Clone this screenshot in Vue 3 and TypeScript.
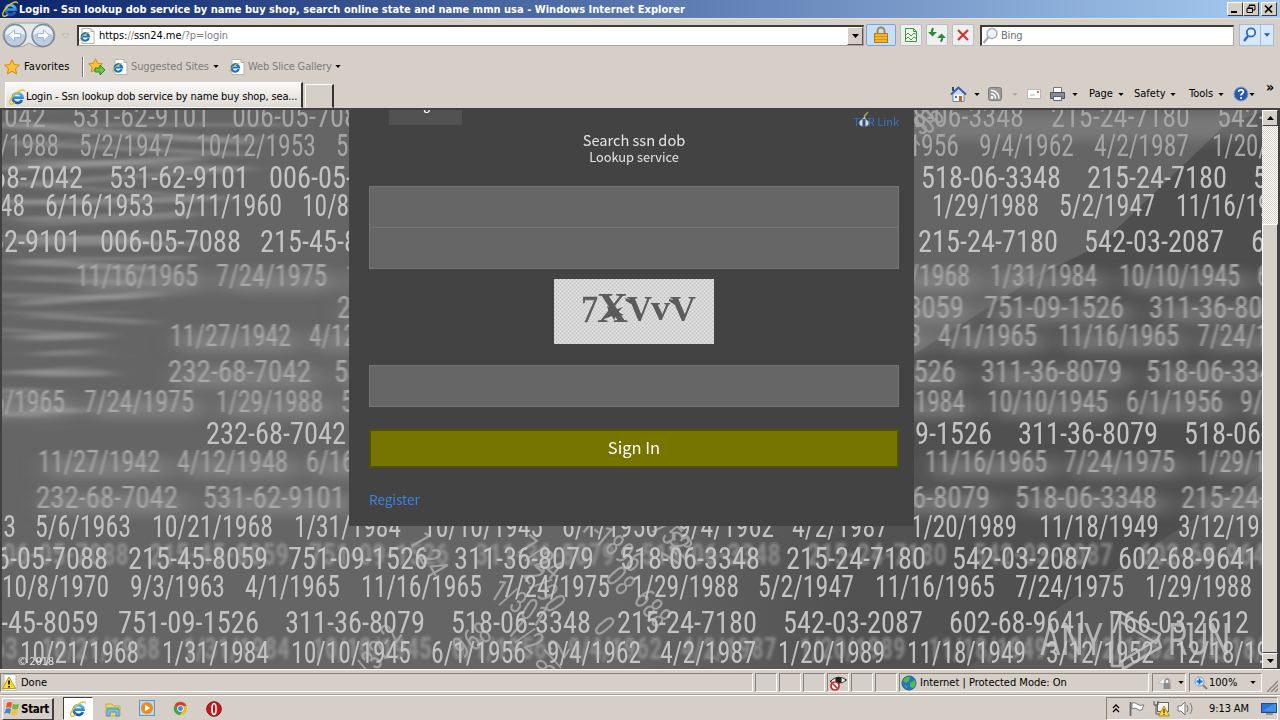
<script setup lang="ts">
type Item = [string, number, number]
interface Row { y: number; soft?: boolean; echo?: boolean; dim?: boolean; items: Item[] }

const rows: Row[] = [
  { y: 127, dim: true, items: [['232-68-7042', -94, 140], ['531-62-9101', 72, 138], ['006-05-7088', 232, 140], ['518-06-3348', 885, 139], ['215-24-7180', 1051, 139], ['542-03-2087', 1217, 139]] },
  { y: 156, dim: true, items: [['10/21/1988', -60, 119], ['5/2/1947', 79, 95], ['10/12/1953', 196, 120], ['5/11/1960', 336, 106], ['6/1/1956', 864, 95], ['9/4/1962', 979, 95], ['4/2/1987', 1094, 95], ['1/20/1989', 1212, 105]] },
  { y: 188, items: [['232-68-7042', -57, 140], ['531-62-9101', 109, 140], ['006-05-7088', 269, 140], ['518-06-3348', 921, 140], ['215-24-7180', 1087, 140], ['542-03-2087', 1253, 140]] },
  { y: 216, items: [['4/12/1948', -82, 107], ['6/16/1953', 45, 109], ['5/11/1960', 173, 109], ['10/8/1970', 302, 107], ['1/29/1988', 932, 107], ['5/2/1947', 1059, 96], ['11/16/1965', 1176, 120]] },
  { y: 252, items: [['531-62-9101', -59, 140], ['006-05-7088', 100, 141], ['215-45-8059', 260, 140], ['215-24-7180', 918, 140], ['542-03-2087', 1084, 140], ['602-68-9641', 1251, 139]] },
  { y: 286, soft: true, items: [['11/16/1965', 76, 122], ['7/24/1975', 216, 111], ['1/29/1988', 346, 107], ['10/21/1968', 849, 121], ['1/31/1984', 990, 107], ['10/10/1945', 1119, 121], ['6/1/1956', 1257, 97]] },
  { y: 318, soft: true, items: [['232-68-7042', 337, 142], ['215-45-8059', 822, 142], ['751-09-1526', 984, 140], ['311-36-8079', 1149, 142]] },
  { y: 346, soft: true, items: [['11/27/1942', 170, 121], ['4/12/1948', 309, 107], ['9/3/1963', 824, 97], ['4/1/1965', 938, 99], ['11/16/1965', 1058, 121], ['7/24/1975', 1197, 111]] },
  { y: 382, soft: true, items: [['232-68-7042', 168, 143], ['531-62-9101', 334, 142], ['751-09-1526', 814, 142], ['311-36-8079', 981, 141], ['518-06-3348', 1146, 142]] },
  { y: 412, soft: true, items: [['11/16/1965', -56, 121], ['7/24/1975', 84, 110], ['1/29/1988', 216, 107], ['5/2/1947', 341, 97], ['1/31/1984', 858, 107], ['10/10/1945', 987, 121], ['6/1/1956', 1126, 97], ['9/4/1962', 1240, 97]] },
  { y: 444, items: [['232-68-7042', 206, 140], ['751-09-1526', 852, 140], ['311-36-8079', 1018, 140], ['518-06-3348', 1184, 140]] },
  { y: 472, soft: true, items: [['11/27/1942', 38, 122], ['4/12/1948', 177, 111], ['6/16/1953', 306, 111], ['11/16/1965', 925, 122], ['7/24/1975', 1064, 111], ['1/29/1988', 1197, 107]] },
  { y: 508, soft: true, items: [['232-68-7042', 36, 142], ['531-62-9101', 203, 142], ['311-36-8079', 848, 142], ['518-06-3348', 1015, 142], ['215-24-7180', 1181, 142]] },
  { y: 537, items: [['9/3/1963', -80, 96], ['5/6/1963', 35, 96], ['10/21/1968', 152, 121], ['1/31/1984', 294, 107], ['10/10/1945', 423, 120], ['6/1/1956', 562, 96], ['9/4/1962', 678, 96], ['4/2/1987', 792, 96], ['1/20/1989', 911, 106], ['11/18/1949', 1039, 120], ['3/12/1952', 1178, 107]] },
  { y: 569, echo: true, items: [['006-05-7088', -32, 140], ['215-45-8059', 128, 140], ['751-09-1526', 288, 140], ['311-36-8079', 454, 140], ['518-06-3348', 620, 140], ['215-24-7180', 786, 140], ['542-03-2087', 952, 140], ['602-68-9641', 1118, 140]] },
  { y: 597, items: [['10/8/1970', 2, 107], ['9/3/1963', 130, 95], ['4/1/1965', 245, 95], ['11/16/1965', 361, 121], ['7/24/1975', 502, 108], ['1/29/1988', 632, 107], ['5/2/1947', 758, 96], ['11/16/1965', 875, 120], ['7/24/1975', 1015, 109], ['1/29/1988', 1145, 107]] },
  { y: 633, items: [['215-45-8059', -41, 140], ['751-09-1526', 118, 141], ['311-36-8079', 285, 140], ['518-06-3348', 451, 140], ['215-24-7180', 617, 140], ['542-03-2087', 783, 140], ['602-68-9641', 949, 139], ['766-03-2612', 1109, 140]] },
  { y: 663, echo: true, items: [['5/6/1963', -98, 95], ['10/21/1968', 20, 119], ['1/31/1984', 162, 107], ['10/10/1945', 291, 120], ['6/1/1956', 431, 95], ['9/4/1962', 547, 94], ['4/2/1987', 660, 96], ['1/20/1989', 778, 107], ['11/18/1949', 907, 119], ['3/12/1952', 1046, 108], ['12/18/1953', 1175, 119]] },
]
const softRows = rows.filter(r => r.soft)
const echoRows = rows.filter(r => r.echo)

const scattered = [
  { t: '1-24', x: 408, y: 540, r: 60 }, { t: '1/32-2', x: 364, y: 690, r: -55 },
  { t: '1/301', x: 488, y: 596, r: 32 }, { t: '7/24', x: 515, y: 550, r: 40 },
  { t: '1-1896', x: 578, y: 528, r: 40 }, { t: '2/90', x: 522, y: 575, r: 55 },
  { t: '08', x: 604, y: 578, r: 48 }, { t: '688', x: 632, y: 600, r: 50 },
  { t: '1/52', x: 644, y: 520, r: 48 }, { t: '1/2', x: 505, y: 632, r: 40 },
  { t: '968', x: 462, y: 660, r: -35 }, { t: '98/2', x: 545, y: 690, r: -58 },
  { t: '0', x: 592, y: 628, r: 50 }, { t: '1/3', x: 676, y: 570, r: -58 },
  { t: '1/30', x: 910, y: 156, r: -56 }, { t: '06', x: 928, y: 136, r: -45 },
]
const streaks = Array.from({ length: 46 }, (_, i) => ({
  x: (i * 37) % 60 - 20,
  y: 114 + i * 6.9 + ((i * 29) % 11) - 5,
  w: Math.max(50, 225 - i * 5 + ((i * 53) % 60)),
  h: 2 + (i * 17) % 5,
  a: ((i * 31) % 9) - 4,
  o: 0.08 + ((i * 7) % 5) * 0.06,
}))
</script>

<template>
  <div class="desktop">
    <svg class="defs" width="0" height="0">
      <defs>
        <linearGradient id="blue" x1="0" y1="0" x2="0" y2="1"><stop offset="0" stop-color="#55b9f5" /><stop offset="1" stop-color="#1256b0" /></linearGradient>
        <symbol id="ie" viewBox="0 0 16 16">
          <path d="M13 11A4.900 4.900 0 1 1 13.400 8.600H4.800" fill="none" stroke="url(#blue)" stroke-width="2.800" />
          <path d="M1.200 14.800C-.8 12.800 3.400 6.200 8.500 3.100C12 .8 15.500 .2 15.600 2.400M1.200 14.800C2.700 15.800 5 14.400 6 13.500" fill="none" stroke="#e9c01e" stroke-width="1.400" />
        </symbol>
        <symbol id="iepage" viewBox="0 0 16 16">
          <path d="M3 .5h9l3 3v12H3z" fill="#fff" stroke="#b5b5aa" />
          <path d="M12 .5v3h3" fill="none" stroke="#aaa" />
          <path d="M9.800 10.200A3.700 3.700 0 1 1 10 8.500H3.500" fill="none" stroke="#1c73bd" stroke-width="2.200" />
          <path d="M1 13C0 11 4 6 10.500 4" fill="none" stroke="#dfb435" />
        </symbol>
        <symbol id="star" viewBox="0 0 16 16">
          <path d="M8 .8l2.200 4.800 5.200.6-3.900 3.500 1.100 5.200L8 12.300l-4.600 2.600 1.100-5.200L.6 6.200l5.200-.6z" fill="#fcc43a" stroke="#d88708" />
        </symbol>
        <symbol id="arrow" viewBox="0 0 7 4"><path d="M0 0h7L3.500 4z" fill="currentColor" /></symbol>
      </defs>
    </svg>

    <header class="titlebar">
      <svg class="i16"><use href="#ie" /></svg>
      <span class="title">Login - Ssn lookup dob service by name buy shop, search online state and name mmn usa - Windows Internet Explorer</span>
      <div class="winbtns">
        <span class="wb"><svg width="14" height="12"><path d="M3 9h6" stroke="#000" stroke-width="2" /></svg></span>
        <span class="wb"><svg width="14" height="12"><path d="M5 5V2.500h6V7H9M5 2h6M3 5.500h5.500V9.500H3zM3 5h6" fill="none" stroke="#000" /></svg></span>
        <span class="wb close"><svg width="14" height="12"><path d="M3 2.500l7 7M10 2.500l-7 7" stroke="#000" stroke-width="1.700" /></svg></span>
      </div>
    </header>

    <nav class="navrow">
      <svg class="travel" width="74" height="34">
        <path d="M15 5h28a12 12 0 0 1 0 24q-8 1-14-4q-6 5-14 4a12 12 0 0 1 0-24z" fill="#e4e6e8" stroke="#a0a0a4" />
        <g v-for="x in [15, 43]" :key="x">
          <circle :cx="x" cy="17.500" r="11" fill="#bccde0" stroke="#7d8896" stroke-width="1.300" />
          <path :d="`M${x - 10} 17a10 9.500 0 0 1 20 0q-10 -4 -20 0z`" fill="#e9eff6" />
        </g>
        <path d="M8.500 17.500l6-5.500v3.600h6v4h-6v3.600z M49.500 17.500l-6-5.500v3.600h-6v4h6v3.600z" fill="#fff" stroke="#9cb3cf" />
        <path d="M62 16h7l-3.500 4z" fill="#dedad3" stroke="#aaa" stroke-width=".7" />
      </svg>
      <div class="address"><svg class="i16"><use href="#iepage" /></svg><span>https:<i>//</i>ssn24.me<i>/?p=login</i></span><b class="drop"><svg width="7" height="4"><use href="#arrow" /></svg></b></div>
      <span class="tb lock"><svg width="16" height="18"><path d="M4.500 8V5a3.500 3.500 0 0 1 7 0v3" fill="none" stroke="#9b8b53" stroke-width="2" /><rect x="1.500" y="7.500" width="13" height="9" fill="#efb52f" stroke="#b87a0c" /><path d="M2 10.500h12M2 13.500h12" stroke="#d5921c" /></svg></span>
      <span class="tb"><svg width="16" height="16"><path d="M2.500 1.500h8l3 3v10h-11zM10.500 1.500v3h3" fill="#effbea" stroke="#3f914a" /><path d="M2 9l3-3 3 3 3-3 3 2M2 13l3-3 3 3 3-3 3 2" fill="none" stroke="#4b9b4d" /></svg></span>
      <span class="tb"><svg width="18" height="16"><path d="M5.500 1.500q-2 1-1.500 4" fill="none" stroke="#288c36" stroke-width="2" /><path d="M0 5h9L4.500 9.500z" fill="#288c36" /><path d="M12.500 14.500q2-1 1.500-4" fill="none" stroke="#288c36" stroke-width="2" /><path d="M9 11h9L13.500 6.500z" fill="#288c36" /></svg></span>
      <span class="tb"><svg width="16" height="16"><path d="M3 3l10 10M13 3L3 13" stroke="#cb3838" stroke-width="2.300" /></svg></span>
      <div class="search"><svg width="18" height="18"><circle cx="10" cy="6.500" r="5" fill="#edf5fb" stroke="#a3b0bd" stroke-width="1.400" /><path d="M6.500 10L1.500 16" stroke="#a9abb0" stroke-width="2.300" /></svg><span>Bing</span></div>
      <span class="go"><svg width="20" height="18"><circle cx="11" cy="6.500" r="4.200" fill="#e3f1ff" stroke="#2a65c8" stroke-width="1.800" /><path d="M8 10l-4 5" stroke="#2a65c8" stroke-width="2.400" /></svg><em><svg width="6" height="4"><use href="#arrow" /></svg></em></span>
    </nav>

    <div class="favrow">
      <svg class="i16"><use href="#star" /></svg><span class="fav">Favorites</span>
      <i class="sep"></i>
      <svg class="addfav" width="18" height="17"><use href="#star" width="15" height="15" /><path d="M7 10h5V7l5 5-5 5v-3H7z" fill="#6cc644" stroke="#2f8b24" /></svg>
      <svg class="i16 sgi"><use href="#iepage" /></svg><span class="dis sug">Suggested Sites</span><svg class="ar"><use href="#arrow" /></svg>
      <svg class="i16 wsi"><use href="#iepage" /></svg><span class="dis web">Web Slice Gallery</span><svg class="ar"><use href="#arrow" /></svg>
    </div>

    <div class="tabrow">
      <div class="tab"><svg class="i16"><use href="#ie" /></svg><span>Login - Ssn lookup dob service by name buy shop, sea...</span></div>
      <div class="newtab"></div>
      <div class="commands">
        <svg class="c-home" width="18" height="17"><path d="M3 8v7.500h11V8" fill="#f3f5fa" stroke="#7085ad" /><path d="M1 8.500l7.500-7 7.500 7" fill="#c9d6ee" stroke="#3c5ba4" stroke-width="2" /><path d="M3 1v4" stroke="#33457a" stroke-width="2" /><path d="M9 10h3v5H9z" fill="#ae6a28" /><path d="M5 10h2v2H5z" fill="#3c76c4" /></svg>
        <svg class="ar"><use href="#arrow" /></svg>
        <svg class="c-rss" width="15" height="15"><rect x=".5" y=".5" width="13" height="13" rx="2" fill="#9b9b9b" stroke="#7b7b7b" /><circle cx="4" cy="10.500" r="1.400" fill="#fff" /><path d="M3 6.500a4.500 4.500 0 0 1 4.500 5M3 3.300a8 8 0 0 1 8 8.200" fill="none" stroke="#fff" stroke-width="1.500" /></svg>
        <svg class="ar pale"><use href="#arrow" /></svg>
        <svg class="c-mail" width="14" height="11"><rect x=".5" y=".5" width="13" height="9" fill="#fff" stroke="#b9b5b0" /><path d="M3 6h5" stroke="#b0b0b0" /><path d="M10 2h2v2h-2z" fill="#cf6565" /></svg>
        <svg class="c-print" width="17" height="16"><path d="M4.500 1.500h8v5h-8z" fill="#fff" stroke="#777" /><path d="M1.500 6.500h14v6h-14z" fill="#858b94" stroke="#4e545c" /><path d="M4.500 10.500h8v4h-8z" fill="#f1f6ff" stroke="#55647a" /></svg>
        <svg class="ar"><use href="#arrow" /></svg>
        <span class="c-page">Page</span><svg class="ar"><use href="#arrow" /></svg>
        <span class="c-safe">Safety</span><svg class="ar"><use href="#arrow" /></svg>
        <span class="c-tool">Tools</span><svg class="ar"><use href="#arrow" /></svg>
        <svg class="c-help" width="16" height="16"><circle cx="8" cy="8" r="7" fill="#2458b4" stroke="#8ba2cd" /><path d="M5.500 6c.3-3 5-2.600 4.900 0C10.300 7.500 8 7.600 8 9.500M8 11v2" fill="none" stroke="#fff" stroke-width="1.700" /></svg>
        <svg class="ar help"><use href="#arrow" /></svg>
        <span class="chev">»</span>
      </div>
    </div>

    <main class="viewport">
      <div class="content">
        <svg class="art" viewBox="2 110 1260 559" width="1260" height="559">
          <defs>
            <filter id="b1" x="-10%" y="-40%" width="120%" height="180%"><feGaussianBlur stdDeviation="1.200 .5" /></filter>
            <filter id="b2" x="-10%" y="-60%" width="120%" height="220%"><feGaussianBlur stdDeviation="12 6" /></filter>
            <filter id="b3" x="-10%" y="-10%" width="120%" height="120%"><feGaussianBlur stdDeviation="12 1.800" /></filter>
            <filter id="b4" x="-10%" y="-40%" width="120%" height="180%"><feGaussianBlur stdDeviation="1.700" /></filter>
            <filter id="b5"><feGaussianBlur stdDeviation=".7" /></filter>
            <linearGradient id="dark" x1="0" x2="1"><stop offset="0" stop-color="#525252" stop-opacity="0" /><stop offset=".35" stop-color="#525252" /><stop offset="1" stop-color="#4d4d4d" /></linearGradient>
          </defs>
          <rect x="2" y="110" width="1260" height="559" fill="#656565" />
          <path d="M1262 112L1225 125L1100 245L1040 275L905 360L620 540V669H965L1262 475z" fill="url(#dark)" />
          <path d="M1262 475L965 669H1262z" fill="#5b5b5b" />
          <g filter="url(#b3)"><rect v-for="(s, i) in streaks" :key="i" :x="s.x" :y="s.y" :width="s.w" :height="s.h" :transform="`rotate(${s.a} 60 ${s.y})`" fill="#d0d0d0" :opacity="s.o" /></g>
          <g filter="url(#b2)" fill="#a0a0a0">
            <template v-for="r in softRows" :key="r.y"><rect v-for="(it, k) in r.items" :key="k" :x="it[1] + 8" :y="r.y - 14" :width="it[2]" height="20" opacity=".46" /></template>
            <rect x="910" y="114" width="350" height="26" opacity=".35" />
          </g>
          <g filter="url(#b5)" class="num scattered"><text v-for="(s, i) in scattered" :key="i" :transform="`translate(${s.x} ${s.y}) rotate(${s.r}) scale(.85 1)`">{{ s.t }}</text></g>
          <g filter="url(#b4)" class="num echo">
            <template v-for="r in echoRows" :key="r.y"><text v-for="(it, k) in r.items" :key="k" :x="it[1] + 21" :y="r.y - 4" :textLength="it[2]" lengthAdjust="spacingAndGlyphs">{{ it[0] }}</text></template>
          </g>
          <g v-for="r in rows" :key="r.y" class="num" :class="{ soft: r.soft, dim: r.dim }" :filter="r.soft ? 'url(#b1)' : undefined">
            <text v-for="(it, k) in r.items" :key="k" :x="it[1]" :y="r.y" :textLength="it[2]" lengthAdjust="spacingAndGlyphs">{{ it[0] }}</text>
          </g>
        </svg>

        <section class="panel">
          <div class="tabcut"><span>g</span></div>
          <div class="tor">TOR Link<svg width="12" height="17"><path d="M6 6C4 9 1 9 1 12c0 5 10 5 10 0C11 9 7 9 7 6L10 1" fill="#d4dae2" stroke="#68717b" /><path d="M6 8v8" stroke="#37506b" stroke-width="3" /><path d="M6 5l4-4" stroke="#91a346" stroke-width="1.500" /></svg></div>
          <h1>Search ssn dob</h1>
          <p>Lookup service</p>
          <div class="fields"><div class="field"></div><div class="field"></div></div>
          <svg class="captcha" width="160" height="65">
            <defs><pattern id="dots" width="4" height="4" patternUnits="userSpaceOnUse"><rect width="4" height="4" fill="#d6d6d6" /><path d="M0 0h1v1H0zM2 2h1v1H2z" fill="#bcbcbc" /><path d="M2 0h1v1H2zM0 2h1v1H0z" fill="#e6e6e6" /></pattern></defs>
            <rect width="160" height="65" fill="url(#dots)" />
            <g class="cap"><text class="seven" x="27" y="43" textLength="17" lengthAdjust="spacingAndGlyphs">7</text><text class="x" x="43" y="43" textLength="31" lengthAdjust="spacingAndGlyphs">X</text><text x="73" y="42" textLength="25" lengthAdjust="spacingAndGlyphs">V</text><text x="97" y="41" textLength="19" lengthAdjust="spacingAndGlyphs">v</text><text x="116" y="42" textLength="26" lengthAdjust="spacingAndGlyphs">V</text></g>
            <path d="M53 27l4 2 3-5 1 7 8-3-5 5 6 3-8 1-2 4-2-4-8 3 5-6zM71 19l9 3-3 3-5-3M115 20l8 2-2 4-6-4" fill="#5a5a5a" />
          </svg>
          <div class="field code"></div>
          <button type="button">Sign In</button>
          <a>Register</a>
        </section>
        <span class="copy">© 2018</span>
        <div class="watermark"><span class="any">ANY</span><svg width="58" height="62"><path d="M5 4h8v53H5z M13 3l40 22-4 9L14 13M15 52l36-22 3 8-38 22z" fill="none" stroke="#c8c8c8" stroke-width="2.600" stroke-linejoin="round" /></svg><span class="run">RUN</span></div>
      </div>
      <aside class="scroll"><span class="sb"><svg width="7" height="4"><path d="M0 4h7L3.500 0z" /></svg></span><div class="track"></div><div class="thumb"></div><span class="sb"><svg width="7" height="4"><use href="#arrow" /></svg></span></aside>
    </main>

    <footer class="status">
      <div class="cell done"><svg width="17" height="17"><path d="M3 .5h12v16H3z" fill="#fff" stroke="#bbb" /><path d="M8 3l6.500 11.500h-13z" fill="#fadb32" stroke="#c49a08" /><path d="M8 6.500v4M8 12v1.500" stroke="#000" stroke-width="1.600" /></svg><span>Done</span></div>
      <div class="cell s"></div><div class="cell s"></div><div class="cell s"></div>
      <div class="cell s eye"><svg width="19" height="18"><path d="M1 7.500Q9 0 17.500 6Q10 12 1 7.500z" fill="#fff" stroke="#222" /><circle cx="9.500" cy="6" r="3.200" fill="#222" /><circle cx="6" cy="12" r="4" fill="#fff" stroke="#c9261f" stroke-width="1.700" /><path d="M3.500 9.500l5 5" stroke="#c9261f" stroke-width="1.600" /></svg></div>
      <div class="cell s"></div><div class="cell s"></div>
      <div class="cell zone"><svg width="16" height="16"><circle cx="8" cy="8" r="7" fill="#2474c0" stroke="#225f99" /><path d="M2 6q2-5 7-4l-1 4-3 2zM9 8l5-3q2 5-2 8l-3-1zM3 10l3 1v3z" fill="#51bc48" /></svg><span>Internet | Protected Mode: On</span></div>
      <div class="cell priv"><svg width="16" height="15"><path d="M1 8l6-5q7-1 7 4l-4 5-4-3z" fill="#eee" stroke="#bbb" /><path d="M8 8V6a2 2 0 0 1 4 0v2" fill="none" stroke="#888" stroke-width="1.300" /><rect x="6.500" y="8" width="7" height="6" fill="#8d8d8d" /></svg><svg class="ar"><use href="#arrow" /></svg></div>
      <div class="cell zoom"><svg width="14" height="14"><circle cx="5.500" cy="5.500" r="4.500" fill="#e4f3ff" stroke="#6d9bd1" /><path d="M5.500 2.500v6M2.500 5.500h6" stroke="#1b63c8" stroke-width="1.800" /><path d="M9 9l4 4" stroke="#a67549" stroke-width="2" /></svg><span>100%</span><svg class="ar"><use href="#arrow" /></svg></div>
      <svg class="grip" width="12" height="13"><path d="M1 13L13 1M5 13l8-8M9 13l4-4" stroke="#8c8880" stroke-width="1.500" /></svg>
    </footer>

    <div class="taskbar">
      <div class="start"><svg width="17" height="16"><path d="M3 2q3-2 5 0L7 7Q4 5.500 2 7z" fill="#e8542b" /><path d="M9 2.500q3 2 6 0L14 7.500q-3 2-6 0z" fill="#74b63b" /><path d="M2 8q2-1.500 5 0l-1 5q-3-2-6 0z" fill="#3f83d7" /><path d="M8 8.500q3 2 6 0l-1 5q-3 2-6 0z" fill="#f6c330" /></svg><b>Start</b></div>
      <div class="task"><svg class="i16"><use href="#ie" /></svg></div>
      <svg class="q q1" width="17" height="16"><path d="M1 3h6l2 2h6v10H1z" fill="#eed574" stroke="#c6a849" /><path d="M2 6h12v3H2z" fill="#8ccb73" /><path d="M2 8h12v7h-3v-4H5v4H2z" fill="#80bfe7" stroke="#5396c4" /></svg>
      <svg class="q q2" width="17" height="17"><rect x=".5" y=".5" width="15" height="15" fill="#bcd8ee" stroke="#6398c5" /><circle cx="8" cy="8" r="6" fill="#f08b18" /><path d="M6 4.500l5 3.500-5 3.500z" fill="#fff" /></svg>
      <svg class="q q3" width="16" height="16"><circle cx="7.500" cy="7.500" r="6.500" fill="#e2be24" /><path d="M1.800 4A6.500 6.500 0 0 1 13.500 5H7.500L5 9z" fill="#d63d31" /><path d="M1.800 4A6.500 6.500 0 0 0 7 14l3-5-4.500-.5z" fill="#3fa34d" /><circle cx="7.500" cy="7.500" r="3" fill="#4588dd" stroke="#fff" /></svg>
      <svg class="q q4" width="16" height="16"><circle cx="8" cy="8" r="7.300" fill="#c51920" stroke="#7d1414" /><ellipse cx="8" cy="8" rx="2" ry="5.500" fill="#b11" stroke="#fff" stroke-width="1.700" /></svg>
      <div class="tray">
        <svg class="t1" width="8" height="10"><path d="M1 4l3-3 3 3M1 8l3-3 3 3" fill="none" stroke="#000" stroke-width="1.300" /></svg>
        <svg class="t2" width="17" height="16"><path d="M1.500 1v14" stroke="#666" stroke-width="1.700" /><path d="M3 2q3-1 5 1t7 1q-2 3-2 5-3 1-5-1t-5 0z" fill="#fff" stroke="#777" /></svg>
        <svg class="t3" width="17" height="17"><rect x="4.500" y="2.500" width="11" height="9" fill="#f2f2f2" stroke="#666" /><path d="M1 1v4h4V1M3 5v9h4" fill="none" stroke="#555" /><path d="M11 6l5.500 10h-11z" fill="#ffd83a" stroke="#b48c0c" /><path d="M11 9v4M11 14v1" stroke="#000" /></svg>
        <svg class="t4" width="17" height="16"><path d="M1 5h3l4-4v13l-4-4H1z" fill="#fff" stroke="#777" /><path d="M10 4q2 3.500 0 7M13 2q4 5.500 0 11" fill="none" stroke="#777" /></svg>
        <span>9:13 AM</span>
        <svg class="t5" width="16" height="12"><rect x=".5" y=".5" width="15" height="9" fill="#2a73d2" stroke="#234a82" /><path d="M1 8L13 1h2v8z" fill="#5ba0ea" opacity=".6" /><path d="M5 11h7" stroke="#555" /></svg>
      </div>
    </div>
  </div>
</template>

<style>
body { margin: 0; overflow: hidden; }
</style>

<style scoped>
* { box-sizing: border-box; }
svg { display: block; flex: none; }
.desktop { width: 1280px; height: 720px; display: flex; flex-direction: column; background: #d5cfc8; color: #000; font: 11px/14px "DejaVu Sans Condensed", "DejaVu Sans", sans-serif; font-stretch: condensed; white-space: nowrap; overflow: hidden; }
.defs { position: absolute; }
.i16 { width: 16px; height: 16px; }
.ar { width: 6px; height: 3px; }
.titlebar { height: 18px; flex: none; display: flex; align-items: center; padding: 0 3px 0 2px; background: linear-gradient(90deg, #0a246a, #a6caf0); color: #fff; }
.title { font-weight: 700; width: 900px; margin-left: 1px; letter-spacing: .02px; padding-top: 1px; }
.winbtns { display: flex; margin-left: auto; }
.wb { width: 16px; height: 14px; background: #d5cfc8; border: 1px solid; border-color: #fff #404040 #404040 #fff; }
.close { margin-left: 2px; }
.navrow { height: 35px; flex: none; display: flex; align-items: center; border-top: 1px solid #e8e2dc; padding-bottom: 2px; }
.travel { margin-right: 3px; }
.address { width: 787px; height: 21px; display: flex; align-items: center; background: #fff; border: 1px solid #a8a49c; border-top: 2px solid #3c3c3c; border-left: 2px solid #3c3c3c; }
.address span { margin-left: 4px; letter-spacing: -.07px; }
.address i { font-style: normal; color: #808080; }
.drop { margin-left: auto; width: 16px; height: 18px; display: grid; place-items: center; background: #d5cfc8; border: 1px solid; border-color: #fff #555 #555 #fff; }
.tb { width: 22px; height: 22px; margin-left: 4px; display: grid; place-items: center; background: #eef0ee; border: 1px solid #b8bfca; border-radius: 2px; }
.lock { width: 30px; margin: 0 0 0 2px; background: #c8def9; border-color: #7ba4dd; }
.search { width: 254px; height: 21px; margin-left: 6px; display: flex; align-items: center; background: #fff; border: 1px solid #aaa; border-top: 2px solid #3c3c3c; border-left: 2px solid #3c3c3c; color: #6d6d6d; }
.search span { margin-left: 1px; letter-spacing: -.2px; }
.go { width: 35px; height: 22px; margin-left: 5px; display: flex; align-items: center; background: #d8e7fa; border: 1px solid #a7bbd8; color: #1b5dad; }
.go em { border-left: 1px solid #a7bbd8; height: 20px; width: 14px; display: grid; place-items: center; }
.favrow { height: 27px; flex: none; display: flex; align-items: center; padding-left: 4px; }
.fav { width: 58px; margin-left: 4px; letter-spacing: .1px; }
.sep { height: 20px; border-left: 1px solid #777; border-right: 1px solid #fff; }
.addfav { margin: 0 6px 0 4px; }
.dis { color: #7c7c7c; letter-spacing: -.15px; }
.sug { margin-left: 3px; width: 82px; }
.wsi { margin-left: 10px; }
.web { margin-left: 3px; width: 87px; }
.sug + .ar { margin-left: 0; }
.tabrow { height: 28px; flex: none; display: flex; align-items: stretch; }
.tab { margin: 2px 0 0 5px; width: 298px; display: flex; align-items: center; padding: 3px 0 0 3px; background: linear-gradient(#fbfaf8, #dedad4); border: 1px solid; border-color: #fff #333 transparent #fff; border-right-width: 2px; }
.tab span { letter-spacing: -.13px; margin-left: 1px; }
.newtab { margin: 4px 0 0 2px; width: 29px; border: 1px solid; border-color: #fff #333 transparent #fff; border-right-width: 2px; }
.commands { margin-left: auto; width: 330px; display: flex; align-items: center; }
.c-home { margin-right: 6px; } .c-rss { margin: 0 9px 0 8px; } .pale { color: #aaa; }
.c-mail { margin: 0 8px 0 9px; } .c-print { margin-right: 6px; }
.c-page { width: 27px; margin: 0 2px 0 11px; } .c-safe { width: 34px; margin: 0 2px 0 10px; } .c-tool { width: 27px; margin: 0 2px 0 13px; }
.c-help { margin-left: 9px; } .chev { margin: -14px 0 0 11px; font-size: 14px; font-weight: 700; }
.viewport { height: 562px; flex: none; display: flex; padding-left: 1px; background: #404040; padding-top: 2px; border-bottom: 1px solid #fff; }
.content { width: 1261px; height: 559px; position: relative; overflow: hidden; }
.art { position: absolute; left: 1px; top: 0; }
.num { font-family: Roboto, sans-serif; font-size: 31px; font-weight: 400; fill: #c3c3c3; }
.dim { fill: #a5a5a5; } .soft { fill: #a9a9a9; }
.echo { fill: #a8a8a8; font-weight: 700; opacity: .6; }
.scattered { fill: #a0a0a0; font-size: 31px; }
.panel { position: relative; width: 565px; height: 416px; margin-left: 348px; padding: 0 15px 0 20px; background: #434343; color: #e5e5e5; font-family: "Noto Sans CJK SC", sans-serif; font-stretch: normal; display: flex; flex-direction: column; align-items: center; }
.tabcut { align-self: flex-start; width: 73px; height: 15px; margin-left: 20px; background: #525252; display: flex; justify-content: center; }
.tabcut span { height: 3px; overflow: hidden; line-height: 0; font-size: 15px; color: #fff; margin-left: 3px; }
.tor { position: absolute; right: 15px; top: 4px; font-size: 11px; line-height: 15px; color: #2f76c7; }
.tor svg { position: absolute; left: 5px; top: -3px; }
h1 { margin: 4px 0 0; font-size: 14.600px; line-height: 21px; font-weight: 400; }
p { margin: -2px 0 0; font-size: 12.800px; line-height: 17px; }
.fields { width: 530px; margin-top: 21px; }
.field { width: 530px; height: 42px; flex: none; background: #666; border: 1px solid #757575; }
.field + .field { margin-top: -1px; }
.captcha { margin-top: 10px; }
.cap { font-family: "Liberation Serif", serif; font-size: 36px; font-weight: 700; fill: #5c5c5c; }
.cap .seven { font-size: 38px; font-weight: 400; stroke: #5c5c5c; stroke-width: .6px; }
.cap .x { font-size: 43px; }
.code { margin-top: 21px; }
button { width: 530px; height: 39px; flex: none; margin: 22px 0 0; padding: 0 0 3px; border: 2px solid #525207; background: #757500; color: #fff; font: 16.500px/30px "Noto Sans CJK SC", sans-serif; }
a { align-self: flex-start; color: #3b83e3; font-size: 13.500px; line-height: 20px; margin-top: 21px; }
.copy { position: absolute; left: 17px; bottom: 2px; font: 11px/14px "Noto Sans CJK SC", sans-serif; color: #e6e6e6; }
.watermark { position: absolute; left: 1039px; top: 499px; display: flex; align-items: center; color: #c8c8c8; opacity: .8; }
.watermark span { font: 45px/58px Roboto, sans-serif; font-weight: 400; transform: scaleX(.7); transform-origin: left; }
.any { width: 67px; letter-spacing: 1px; } .run { width: 70px; margin-left: 3px; }
.scroll { width: 16px; display: flex; flex-direction: column; background: #d5cfc8; }
.sb { height: 16px; flex: none; display: grid; place-items: center; border: 1px solid; border-color: #fff #404040 #404040 #fff; }
.track { height: 98px; background: repeating-conic-gradient(#fff 0 25%, #d5cfc8 0 50%) 0 0 / 2px 2px; }
.thumb { flex: 1; background: #d5d1c8; border: 1px solid; border-color: #fff #404040 #404040 #fff; }
.status { height: 23px; margin-top: 2px; flex: none; display: flex; gap: 2px; border-bottom: 1px solid #aaa49b; padding: 1px 0; }
.cell { height: 19px; display: flex; align-items: center; border: 1px solid; border-color: #858078 #fff #fff #858078; }
.done { width: 753px; } .done span { margin-left: 3px; }
.s { width: 22px; }
.eye { justify-content: center; }
.zone { width: 250px; margin-left: 0; padding-left: 1px; } .zone span { margin-left: 3px; }
.priv { width: 34px; gap: 5px; padding-left: 4px; margin-left: 1px; }
.zoom { width: 73px; padding-left: 4px; margin-left: 1px; } .zoom span { margin-left: 1px; width: 41px; }
.grip { margin: 6px 0 0 2px; }
.taskbar { flex: 1; display: flex; align-items: center; border-top: 1px solid #fff; padding: 1px 2px 2px; }
.start { width: 52px; height: 22px; display: flex; align-items: center; padding-left: 1px; border: 1px solid; border-color: #fff #404040 #404040 #fff; border-right-width: 2px; }
.start b { font-size: 11.500px; letter-spacing: -.3px; }
.task { width: 30px; height: 23px; margin-left: 9px; display: grid; place-items: center; background: #fff; border: 1px solid; border-color: #404040 #fff #fff #404040; }
.q1 { margin-left: 12px; } .q2 { margin-left: 17px; } .q3 { margin-left: 17px; } .q4 { margin-left: 17px; }
.tray { margin-left: auto; width: 172px; height: 23px; display: flex; align-items: center; padding-left: 5px; border: 1px solid; border-color: #858078 #fff #fff #858078; }
.t2 { margin-left: 9px; } .t3 { margin-left: 7px; } .t4 { margin-left: 7px; }
.tray span { width: 44px; margin-left: 15px; letter-spacing: -.1px; } .t5 { margin-left: 8px; }
</style>
